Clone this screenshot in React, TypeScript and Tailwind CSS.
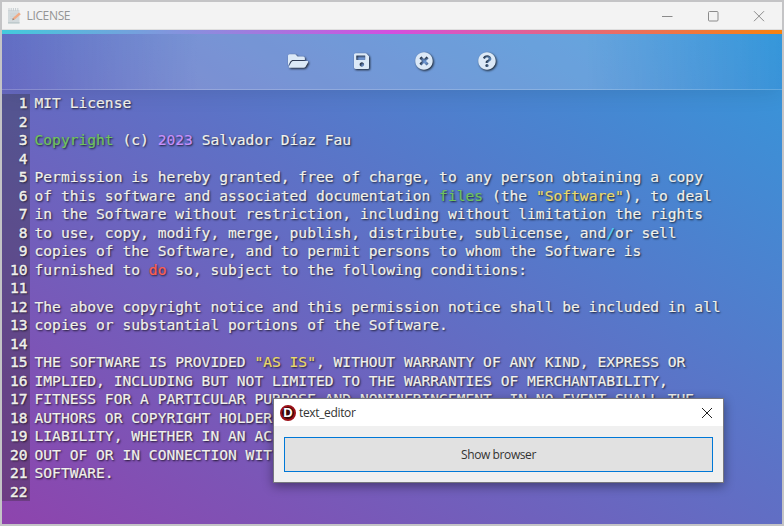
import { Fragment } from "react";
import { FaFolderOpen, FaSave, FaTimesCircle, FaQuestionCircle } from "react-icons/fa";

type Token = [text: string, color?: string];

const GREEN = "text-[#6fc35f]";
const PURPLE = "text-[#c791fb]";
const YELLOW = "text-[#ebdb6c]";
const RED = "text-[#ff6050]";
const CYAN = "text-[#50d0f4]";

const LINES: Token[][] = [
  [["MIT License"]],
  [],
  [["Copyright", GREEN], [" (c) "], ["2023", PURPLE], [" Salvador Díaz Fau"]],
  [],
  [["Permission is hereby granted, free of charge, to any person obtaining a copy"]],
  [["of this software and associated documentation "], ["files", GREEN], [" (the "], ['"Software"', YELLOW], ["), to deal"]],
  [["in the Software without restriction, including without limitation the rights"]],
  [["to use, copy, modify, merge, publish, distribute, sublicense, and"], ["/", CYAN], ["or sell"]],
  [["copies of the Software, and to permit persons to whom the Software is"]],
  [["furnished to "], ["do", RED], [" so, subject to the following conditions:"]],
  [],
  [["The above copyright notice and this permission notice shall be included in all"]],
  [["copies or substantial portions of the Software."]],
  [],
  [["THE SOFTWARE IS PROVIDED "], ['"AS IS"', YELLOW], [", WITHOUT WARRANTY OF ANY KIND, EXPRESS OR"]],
  [["IMPLIED, INCLUDING BUT NOT LIMITED TO THE WARRANTIES OF MERCHANTABILITY,"]],
  [["FITNESS FOR A PARTICULAR PURPOSE AND NONINFRINGEMENT. IN NO EVENT SHALL THE"]],
  [["AUTHORS OR COPYRIGHT HOLDER"]],
  [["LIABILITY, WHETHER IN AN AC"]],
  [["OUT OF OR IN CONNECTION WIT"]],
  [["SOFTWARE."]],
  [],
];

function NotepadIcon() {
  return (
    <svg viewBox="0 0 16 18" className="h-[18px] w-4">
      <path d="M1 3h11.5v13.5H1z" fill="#d3dadd" />
      <path d="M1 15h11.5v1.5H1z" fill="#bfcacd" />
      <path d="M2 1v3M4.2 1v3M6.4 1v3M8.6 1v3M10.8 1v3" stroke="#c6cdd0" strokeWidth="1" />
      <path d="M3 7h7M3 9.2h5M3 11.4h3" stroke="#c8d0d3" strokeWidth=".7" />
      <path d="M12 5.6l1.8 1.7-6.1 5.2-2.4.7.6-2.3z" fill="#f0aa85" />
      <path d="M5.3 13.2l.6-2.1 1.5 1.4z" fill="#878787" />
    </svg>
  );
}

function TitleBar() {
  return (
    <header className="relative z-20 flex h-7 items-center border-b border-[#dedede] bg-[#f3f3f3] pl-[5px] text-[#949494]">
      <NotepadIcon />
      <span className="ml-[3.5px] grow text-[12px] leading-none tracking-[-0.35px]">LICENSE</span>
      <svg viewBox="0 0 104 12" className="mr-[17px] h-3 w-[104px]" fill="none" stroke="#8b8b8b">
        <path d="M1 6.5h10.5" />
        <rect x="47.5" y="1.5" width="9.5" height="9.5" rx="1" />
        <path d="M93 1.2l10 10M103 1.2l-10 10" />
      </svg>
    </header>
  );
}

function Toolbar() {
  return (
    <nav className="relative z-10 flex h-14 shrink-0 items-center justify-center gap-[45.5px] border-b border-white/20 bg-[linear-gradient(to_right,transparent,rgba(255,255,255,0.2)_25%,rgba(255,255,255,0.2)_75%,transparent)] pb-px text-[#dce9f7] shadow-[0_0_25px_rgba(0,0,0,0.12)]">
      <FaFolderOpen className="h-[18px] w-[20.25px] drop-shadow-[1px_1px_1px_rgba(0,0,0,0.8)]" />
      <FaSave className="h-[18px] w-[15.75px] drop-shadow-[1px_1px_1px_rgba(0,0,0,0.8)]" />
      <FaTimesCircle className="h-[18px] w-[18px] drop-shadow-[1px_1px_1px_rgba(0,0,0,0.8)]" />
      <FaQuestionCircle className="h-[18px] w-[18px] drop-shadow-[1px_1px_1px_rgba(0,0,0,0.8)]" />
    </nav>
  );
}

function Editor() {
  return (
    <div className="mt-1 grid grid-cols-[28px_1fr] font-['DejaVu_Sans_Mono',monospace] text-[14.61px] leading-[18.5px] text-[#f1f1ec] [text-shadow:1px_1px_2px_rgba(0,0,0,0.8)]">
      {LINES.map((tokens, i) => (
        <Fragment key={i}>
          <span className="h-[18.5px] bg-[#272822]/30 pr-[2.5px] text-right [-webkit-text-stroke:0.4px_currentColor]">{i + 1}</span>
          <code className="h-[18.5px] whitespace-pre pl-[4.5px] font-['DejaVu_Sans_Mono',monospace]">
            {tokens.map(([text, color], j) => (
              <span key={j} className={`[-webkit-text-stroke:0.2px_currentColor] ${color ?? ""}`}>{text}</span>
            ))}
          </code>
        </Fragment>
      ))}
    </div>
  );
}

function Dialog() {
  return (
    <div className="absolute top-[396px] left-[271px] z-20 flex h-[85px] w-[451px] flex-col border border-[#77777f] bg-[#f0f0f0] shadow-[0_3px_10px_rgba(0,0,0,0.4)]">
      <div className="flex h-[27px] shrink-0 items-center bg-white pl-[6px] text-[#333]">
        <span className="flex size-4 shrink-0 items-center justify-center rounded-full border-2 border-[#9c1118] bg-[#3b080b] font-['Liberation_Sans',sans-serif] text-[13px] leading-none font-bold text-white">
          D
        </span>
        <span className="ml-[3px] grow text-[12px] leading-none tracking-[-0.35px]">text_editor</span>
        <svg viewBox="0 0 12 12" className="mr-[10px] size-3" fill="none" stroke="#222">
          <path d="M1 1l10 10M11 1L1 11" />
        </svg>
      </div>
      <button className="mx-[10px] mt-[11px] h-[35px] border border-[#0078d7] bg-[#e1e1e1] pt-px text-[12px] tracking-[-0.4px] text-[#333]">
        Show browser
      </button>
    </div>
  );
}

export default function App() {
  return (
    <div className="relative flex h-[526px] w-[784px] flex-col overflow-hidden border-2 border-[#c4c4c6] font-['Open_Sans',sans-serif]">
      <TitleBar />
      <div className="flex grow flex-col bg-[linear-gradient(to_top_right,#8e44ad,#3498db)]">
        <div className="relative z-20 h-1 shrink-0 bg-[linear-gradient(to_right,#43cbdc,#d34fdf,#f9820d)]" />
        <Toolbar />
        <Editor />
      </div>
      <Dialog />
    </div>
  );
}
